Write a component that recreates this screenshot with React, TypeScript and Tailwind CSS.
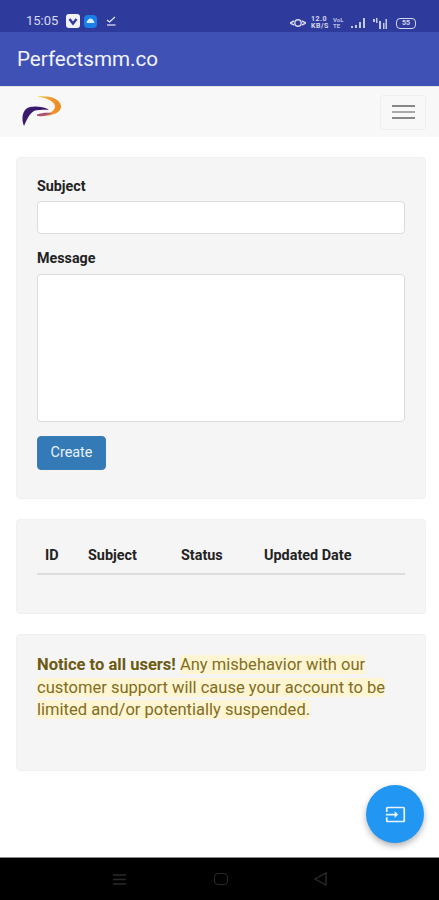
import { MdInput } from "react-icons/md";

function StatusBar() {
  return (
    <div className="flex h-8 shrink-0 items-end justify-between bg-[#2f3b9c] pb-[2px] pl-[26px] pr-[23px] text-white">
      <div className="flex items-center">
        <span className="text-[13px] leading-[18px] text-[#d5d9f0] font-['Roboto',sans-serif]">15:05</span>
        <svg className="ml-2" width="14" height="14" viewBox="0 0 14 14">
          <rect width="14" height="14" rx="3" fill="#f1f2fa" />
          <path d="M3.5 5 L7 9.5 L10.5 5" stroke="#2f3b9c" strokeWidth="2.4" fill="none" />
        </svg>
        <svg className="ml-[4px]" width="13" height="13" viewBox="0 0 13 13">
          <rect width="13" height="13" rx="4" fill="#1b7fe8" />
          <path d="M2.5 8 C3 5 5 3.5 6.5 3.5 C8 3.5 10 5 10.5 8 Z" fill="#dcecff" />
        </svg>
        <svg className="ml-[8px]" width="12" height="12" viewBox="0 0 12 12" fill="none" stroke="#e6e8f6" strokeWidth="1.2">
          <path d="M2 5 L4.5 7 L10 2" />
          <path d="M2 10 H10.5" />
        </svg>
      </div>
      <div className="flex items-center opacity-90">
        <svg width="16" height="12" viewBox="0 0 16 12" fill="none" stroke="#e6e8f6" strokeWidth="1.4">
          <path d="M0 6 L4 4 M0 6 L4 8 M16 6 L12 4 M16 6 L12 8" />
          <circle cx="8" cy="6" r="3.2" />
        </svg>
        <span className="ml-[5px] w-[18px] text-[7px] font-bold leading-[7px] tracking-[0.5px] text-[#e6e8f6] font-['Roboto',sans-serif]">
          12.0
          <br />
          KB/S
        </span>
        <span className="ml-[4px] w-[14px] text-[6px] font-bold leading-[6px] text-[#c9cdea] font-['Roboto',sans-serif]">
          VoL
          <br />
          TE
        </span>
        <svg className="ml-[4px]" width="14" height="10" viewBox="0 0 14 10" fill="#d5d9f0">
          <rect x="0" y="8" width="2" height="2" />
          <rect x="4" y="7" width="2" height="3" />
          <rect x="8" y="4" width="2" height="6" />
          <rect x="12" y="0" width="2" height="10" />
        </svg>
        <svg className="ml-[8px]" width="14" height="11" viewBox="0 0 14 11" fill="#d5d9f0">
          <rect x="0" y="1" width="2" height="3" />
          <rect x="3" y="0" width="1.5" height="5" />
          <rect x="6" y="3" width="2" height="8" />
          <rect x="10" y="5" width="1.5" height="6" />
          <rect x="12.5" y="1" width="1.5" height="10" />
        </svg>
        <div className="ml-[9px] flex h-[11px] w-[20px] items-center justify-center rounded-[4px] border border-[#e6e8f6] text-[7px] font-bold leading-none text-[#e6e8f6] font-['Roboto',sans-serif]">
          55
        </div>
      </div>
    </div>
  );
}

function Logo() {
  return (
    <svg width="42" height="34" viewBox="0 0 42 34">
      <defs>
        <linearGradient id="logoTail" x1="0" y1="0" x2="1" y2="0">
          <stop offset="0" stopColor="#f6d64a" />
          <stop offset="0.6" stopColor="#f0982a" />
          <stop offset="1" stopColor="#ec8a22" />
        </linearGradient>
      </defs>
      <path
        d="M16 1.5 C27 0 39 3 40 11 C40.5 18 30 22 15 21 C24 20 33 18 34 12 C34.5 7 27 3 16 1.5 Z"
        fill="url(#logoTail)"
      />
      <path
        d="M3 31 C0 24 1 14 9 12 C15 10.5 23 12 28 14.5 C22 15 16 14.5 13 16 C9 18 6 24 3 31 Z"
        fill="#3b1a6e"
      />
      <path d="M16 19.5 C20 18 25 17.5 31 18 C27 20.5 22 21.5 16 21 Z" fill="#b0507a" />
    </svg>
  );
}

export default function App() {
  return (
    <div className="relative flex h-[900px] w-[439px] flex-col overflow-hidden bg-white font-['Roboto',sans-serif] text-[#222]">
      <StatusBar />
      <div className="flex h-[54px] shrink-0 items-center bg-[#3f51b5] pl-[17px] text-[20.6px] text-[#f2f3fb]">
        Perfectsmm.co
      </div>
      <nav className="flex h-[51px] shrink-0 items-center justify-between border-t border-[#e3e3e3] bg-[#f8f8f8] pl-[21px] pr-[13px]">
        <Logo />
        <button className="flex h-[35px] w-[46px] flex-col items-center justify-center gap-[4px] rounded-[4px] border border-[#eeeeee]">
          <span className="h-[2px] w-[23px] bg-[#888]" />
          <span className="h-[2px] w-[23px] bg-[#aaa]" />
          <span className="h-[2px] w-[23px] bg-[#888]" />
        </button>
      </nav>

      <main className="flex flex-1 flex-col gap-5 pl-4 pr-[13px] pt-5">
        <section className="h-[342px] rounded-[4px] border border-[#f0f0f0] bg-[#f5f5f5] px-5 pt-[19px]">
          <label className="block text-[14.3px] font-bold leading-[18px]">Subject</label>
          <input className="mt-[6px] block h-[33px] w-full rounded-[4px] border border-[#dcdcdc] bg-white" />
          <label className="mt-[15px] block text-[14.3px] font-bold leading-[18px]">Message</label>
          <textarea className="mt-[7px] block h-[148px] w-full resize-none rounded-[4px] border border-[#dcdcdc] bg-white" />
          <button className="mt-[14px] h-[34px] w-[69px] rounded-[4px] border border-[#3a7db5] bg-[#337ab7] text-[14.4px] text-[#eaf2f9]">
            Create
          </button>
        </section>

        <section className="h-[95px] rounded-[4px] border border-[#f0f0f0] bg-[#f5f5f5] px-5 pt-[27px]">
          <div className="grid h-[28px] grid-cols-[43px_93px_83px_1fr] border-b-2 border-[#ddd] pl-2 text-[14.4px] font-bold leading-[18px]">
            <span>ID</span>
            <span>Subject</span>
            <span>Status</span>
            <span>Updated Date</span>
          </div>
        </section>

        <section className="h-[137px] rounded-[4px] border border-[#f0f0f0] bg-[#f5f5f5] px-5 pt-[19px] text-[16.55px] leading-[22.5px] text-[#7f6d22]">
          <p>
            <strong className="font-bold text-[#6d5a12]">Notice to all users!</strong>{" "}
            <span className="bg-[#fff5d2]">
              Any misbehavior with our customer support will cause your account to be limited and/or potentially suspended.
            </span>
          </p>
        </section>
      </main>

      <button className="absolute left-[366px] top-[785px] flex h-[58px] w-[58px] items-center justify-center rounded-full bg-[#2196f3] text-[#e8f4fe] shadow-[0_3px_6px_rgba(0,0,0,0.3)]">
        <MdInput size={21} />
      </button>

      <div className="flex h-[43px] shrink-0 items-center border-t border-[#888] bg-black">
        <svg className="ml-[113px]" width="13" height="13" viewBox="0 0 13 13" stroke="#2a2a2a" strokeWidth="1.4">
          <path d="M0 2 H13 M0 6.5 H13 M0 11 H13" />
        </svg>
        <div className="ml-[88px] h-[12px] w-[14px] rounded-[4px] border-[1.5px] border-[#2a2a2a]" />
        <svg className="ml-[85px]" width="14" height="14" viewBox="0 0 14 14" fill="none" stroke="#2a2a2a" strokeWidth="1.4">
          <path d="M13 1 V13 L2 7 Z" />
        </svg>
      </div>
    </div>
  );
}
